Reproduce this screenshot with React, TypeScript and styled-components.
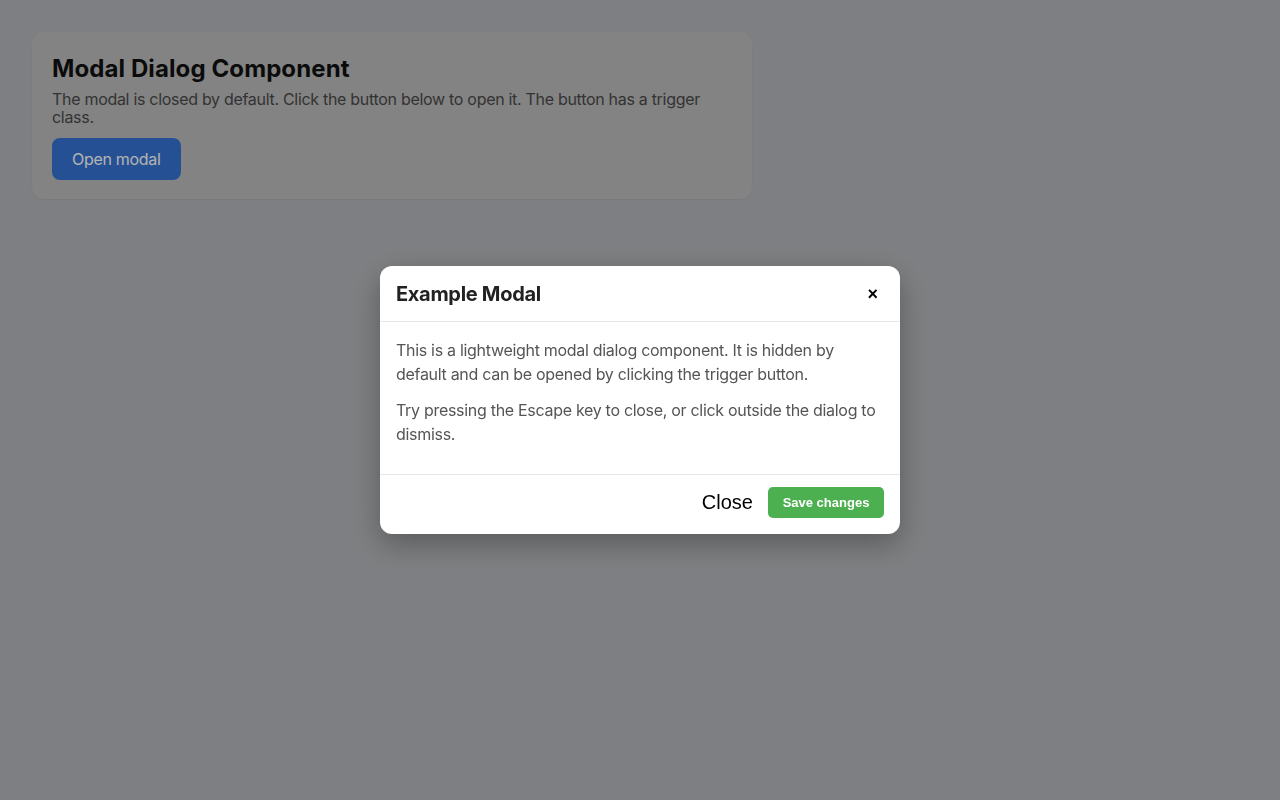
import React from "react";
import styled, { createGlobalStyle } from "styled-components";

const GlobalStyle = createGlobalStyle`
  html, body {
    margin: 0;
    padding: 0;
    background: #b5b7ba;
    font-family: Inter, "Noto Sans", sans-serif;
  }
  * { box-sizing: border-box; }
`;

const Page = styled.main`
  min-height: 800px;
  padding: 32px;
`;

const Card = styled.section`
  width: 720px;
  background: #bcbcbc;
  border-radius: 12px;
  padding: 20px 20px 19px;
  display: flex;
  flex-direction: column;
  align-items: flex-start;
  box-shadow: 0 1px 2px rgba(0, 0, 0, 0.06);
`;

const Heading = styled.h1`
  margin: 0 0 4px;
  font-size: 24px;
  line-height: 34px;
  font-weight: 700;
  letter-spacing: 0.1px;
  color: #111;
`;

const Lead = styled.p`
  margin: 0 0 12px;
  font-size: 16px;
  line-height: 18px;
  letter-spacing: -0.3px;
  color: #4a4a4a;
`;

const Trigger = styled.button`
  border: none;
  background: #3574d4;
  color: #fff;
  font-family: Inter, sans-serif;
  font-size: 16px;
  letter-spacing: -0.3px;
  height: 42px;
  padding: 0 20px;
  border-radius: 8px;
`;

const Backdrop = styled.div`
  position: fixed;
  inset: 0;
  background: rgba(0, 0, 0, 0.3);
  display: flex;
  align-items: center;
  justify-content: center;
`;

const Dialog = styled.div`
  width: 520px;
  background: #fff;
  border-radius: 12px;
  box-shadow: 0 10px 30px rgba(0, 0, 0, 0.3);
  overflow: hidden;
  display: flex;
  flex-direction: column;
`;

const Header = styled.header`
  display: flex;
  align-items: center;
  justify-content: space-between;
  padding: 16px;
  height: 56px;
  border-bottom: 1px solid #e8e8e8;
`;

const Title = styled.h2`
  margin: 0;
  font-size: 20px;
  line-height: 24px;
  font-weight: 700;
  letter-spacing: -0.3px;
  color: #222;
`;

const CloseX = styled.button`
  border: none;
  background: transparent;
  font-family: "Liberation Sans", Arial, sans-serif;
  font-size: 18px;
  font-weight: 700;
  line-height: 1;
  color: #000;
  padding: 0 6px;
`;

const Body = styled.div`
  padding: 16px 16px 16px;
`;

const BodyText = styled.p`
  margin: 0 0 12px;
  font-size: 16px;
  line-height: 24px;
  letter-spacing: -0.3px;
  color: #555;
`;

const Footer = styled.footer`
  display: flex;
  justify-content: flex-end;
  align-items: center;
  gap: 15px;
  padding: 12px 16px 16px;
  border-top: 1px solid #e8e8e8;
`;

const TextButton = styled.button`
  border: none;
  background: transparent;
  padding: 0;
  font-family: "Liberation Sans", Arial, sans-serif;
  font-size: 20px;
  color: #000;
`;

const SaveButton = styled.button`
  border: none;
  background: #4caf50;
  color: #fff;
  font-family: "Liberation Sans", Arial, sans-serif;
  font-size: 13px;
  font-weight: 700;
  height: 31px;
  width: 116px;
  border-radius: 5px;
`;

export default function App() {
  return (
    <>
      <GlobalStyle />
      <Page>
        <Card>
          <Heading>Modal Dialog Component</Heading>
          <Lead>
            The modal is closed by default. Click the button below to open it. The button has a trigger class.
          </Lead>
          <Trigger>Open modal</Trigger>
        </Card>
      </Page>
      <Backdrop>
        <Dialog role="dialog" aria-modal="true">
          <Header>
            <Title>Example Modal</Title>
            <CloseX aria-label="Close">×</CloseX>
          </Header>
          <Body>
            <BodyText>
              This is a lightweight modal dialog component. It is hidden by default and can be opened by clicking the trigger button.
            </BodyText>
            <BodyText>
              Try pressing the Escape key to close, or click outside the dialog to dismiss.
            </BodyText>
          </Body>
          <Footer>
            <TextButton>Close</TextButton>
            <SaveButton>Save changes</SaveButton>
          </Footer>
        </Dialog>
      </Backdrop>
    </>
  );
}
